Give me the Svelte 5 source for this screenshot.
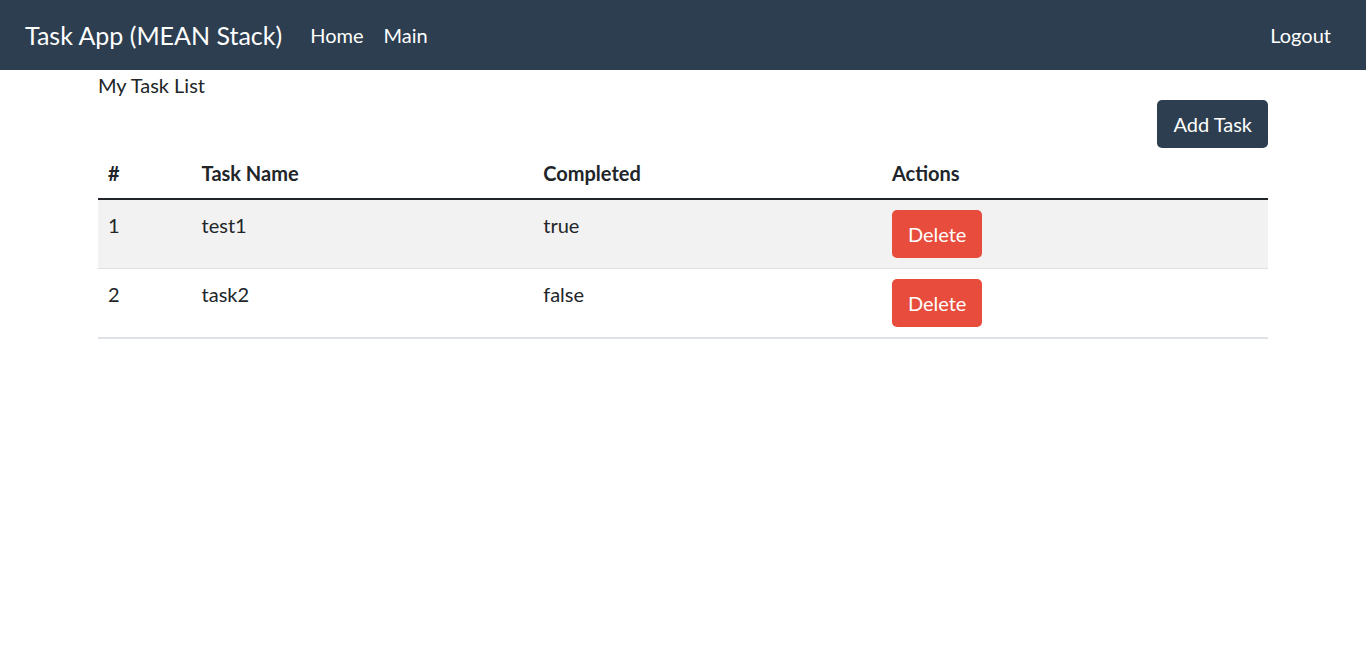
<script>
  let tasks = $state([
    { name: 'test1', completed: true },
    { name: 'task2', completed: false }
  ]);

  function addTask() {
    tasks.push({ name: `task${tasks.length + 1}`, completed: false });
  }

  function removeTask(index) {
    tasks.splice(index, 1);
  }
</script>

<nav class="navbar">
  <a class="brand" href="#top">Task App (MEAN Stack)</a>
  <a class="link" href="#home">Home</a>
  <a class="link" href="#main">Main</a>
  <a class="link logout" href="#logout">Logout</a>
</nav>

<main class="container">
  <div>My Task List</div>
  <div class="toolbar">
    <button class="btn primary" type="button" onclick={addTask}>Add Task</button>
  </div>
  <table>
    <thead>
      <tr>
        <th class="num" scope="col">#</th>
        <th class="name" scope="col">Task Name</th>
        <th class="done" scope="col">Completed</th>
        <th class="actions" scope="col">Actions</th>
      </tr>
    </thead>
    <tbody>
      {#each tasks as task, i}
        <tr>
          <td>{i + 1}</td>
          <td>{task.name}</td>
          <td>{task.completed}</td>
          <td><button class="btn danger" type="button" onclick={() => removeTask(i)}>Delete</button></td>
        </tr>
      {/each}
    </tbody>
  </table>
</main>

<style>
  :global(body) {
    margin: 0;
    background: #fff;
    color: #212529;
    font-family: Lato, sans-serif;
    font-size: 20px;
    line-height: 30px;
  }

  .navbar {
    display: flex;
    align-items: center;
    min-height: 70px;
    padding: 0 25px;
    background: #2c3e50;
  }

  .navbar a {
    color: #fff;
    text-decoration: none;
  }

  .brand {
    margin-right: 18px;
    font-size: 25px;
  }

  .link {
    padding: 10px;
  }

  .logout {
    margin-left: auto;
  }

  .container {
    max-width: 1170px;
    margin: 0 auto;
    padding: 0 20px;
  }

  .toolbar {
    display: flex;
    justify-content: flex-end;
  }

  .btn {
    box-sizing: border-box;
    height: 48px;
    padding: 0 16px;
    border: 0;
    border-radius: 5px;
    color: #fff;
    font: inherit;
    vertical-align: top;
    cursor: pointer;
  }

  .primary {
    background: #2c3e50;
  }

  .danger {
    background: #e74c3c;
  }

  table {
    width: 100%;
    table-layout: fixed;
    border-collapse: collapse;
    border-bottom: 2px solid #dee2e6;
  }

  th,
  td {
    box-sizing: border-box;
    padding: 10px;
    text-align: left;
    vertical-align: top;
  }

  th {
    border-bottom: 2px solid #212529;
  }

  td {
    border-bottom: 1px solid #dee2e6;
  }

  tbody tr:nth-child(odd) {
    background: #f2f2f2;
  }

  .num {
    width: 8%;
  }

  .name {
    width: 29.2%;
  }

  .done {
    width: 29.8%;
  }

  .actions {
    width: 33%;
  }
</style>
